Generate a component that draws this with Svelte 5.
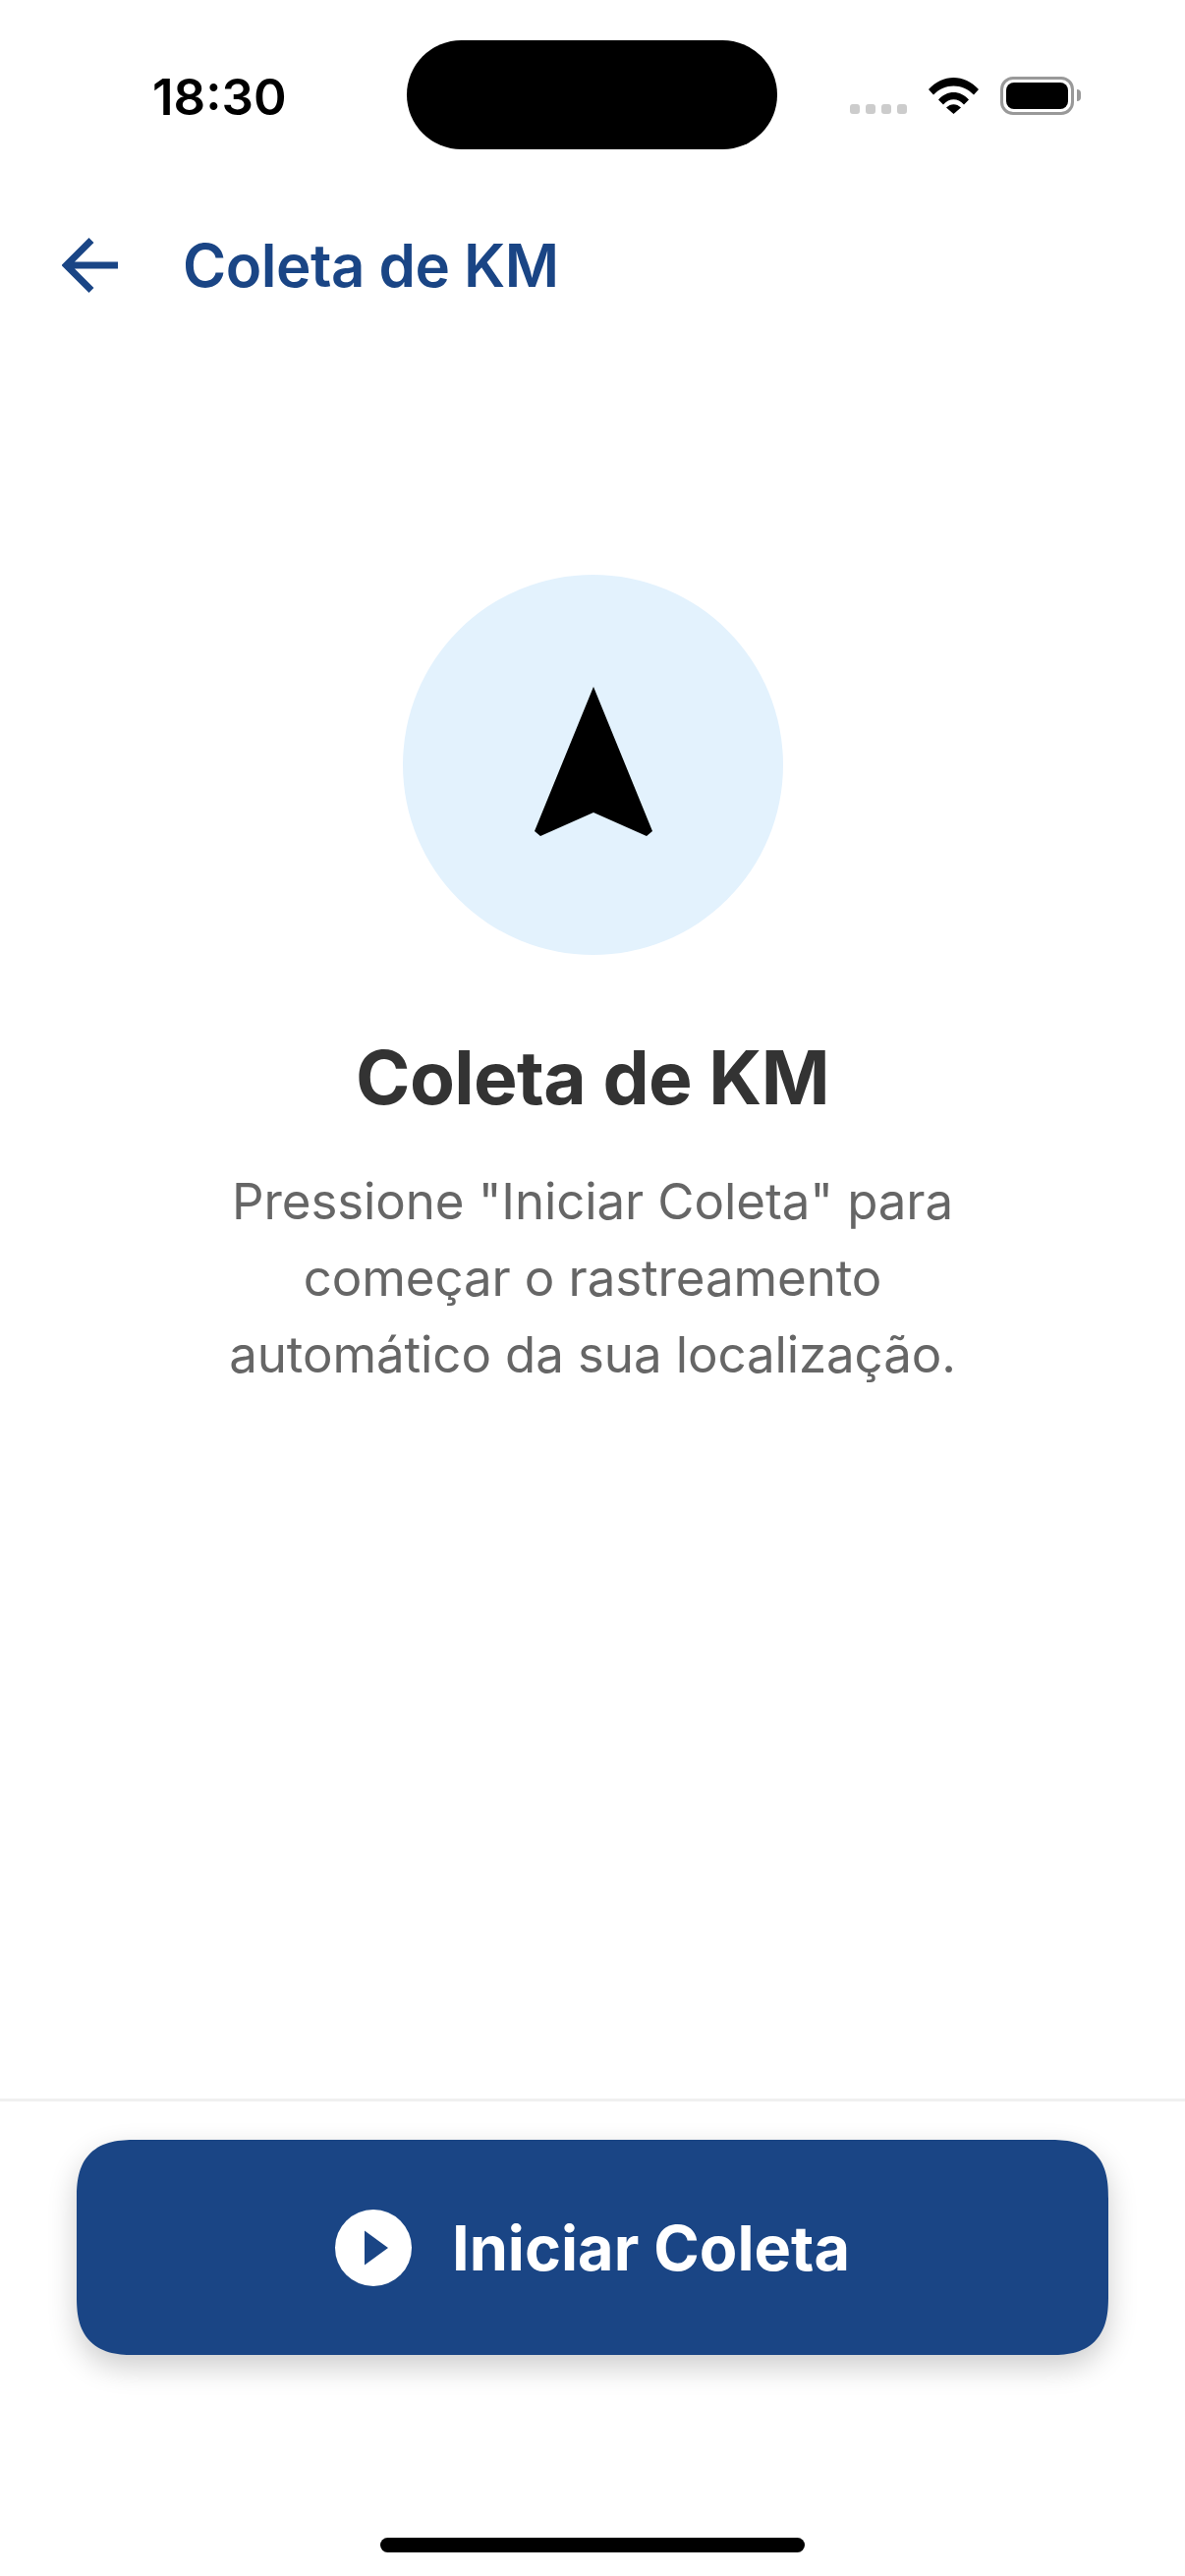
<script>
	const title = 'Coleta de KM'
	const signalDots = [0, 1, 2, 3]
</script>

<div class="screen">
	<div class="status-bar">
		<span class="time">18:30</span>
		<div class="island"></div>
		<div class="signal">
			{#each signalDots as dot (dot)}
				<span class="dot"></span>
			{/each}
		</div>
		<svg class="wifi" width="51" height="37" viewBox="0 0 51 37">
			<path d="M0 12 C14.500 -4 36.500 -4 51 12 L46 17.500 C34.500 5.500 16.500 5.500 5 17.500 Z" />
			<path d="M10 22.500 C18.500 12.500 32.500 12.500 41 22.500 L36 27.500 C30 20.500 21 20.500 15 27.500 Z" />
			<path d="M18 30.500 C22.500 26 28.500 26 33 30.500 L25.500 37 Z" />
		</svg>
		<div class="battery"><div class="battery-fill"></div></div>
		<div class="battery-cap"></div>
	</div>

	<header class="top-bar">
		<svg class="back" width="57" height="56" viewBox="0 0 57 56" fill="none">
			<path d="M57 28 H6 M30 2.500 L4.500 28 L30 53.500" stroke="#1a4585" stroke-width="7" />
		</svg>
		<h1>{title}</h1>
	</header>

	<main class="content">
		<div class="circle">
			<svg width="120" height="152" viewBox="0 0 120 152">
				<path d="M60 0 L120 147 L114 152 L60 128 L6 152 L0 147 Z" fill="#000" />
			</svg>
		</div>
		<h2>{title}</h2>
		<p>Pressione "Iniciar Coleta" para<br />começar o rastreamento<br />automático da sua localização.</p>
	</main>

	<footer class="actions">
		<button class="start">
			<svg width="78" height="78" viewBox="0 0 78 78">
				<circle cx="39" cy="39" r="39" fill="#fff" />
				<path d="M30 21.500 L54 39 L30 56.500 Z" fill="#1a4585" />
			</svg>
			<span>Iniciar Coleta</span>
		</button>
		<div class="home-indicator"></div>
	</footer>
</div>

<style>
	:global(body) {
		background: #fff;
	}

	.screen {
		width: 1206px;
		height: 2622px;
		display: flex;
		flex-direction: column;
		background: #fff;
		font-family: Inter, "Liberation Sans", sans-serif;
		overflow: hidden;
	}

	.status-bar {
		height: 152px;
		box-sizing: border-box;
		padding-top: 41px;
		display: flex;
		align-items: flex-start;
	}

	.time {
		width: 134px;
		margin-left: 155px;
		margin-top: 27px;
		font-size: 51px;
		line-height: 62px;
		font-weight: 600;
		color: #000;
		white-space: nowrap;
	}

	.island {
		width: 377px;
		height: 111px;
		margin-left: 125px;
		border-radius: 56px;
		background: #000;
	}

	.signal {
		display: flex;
		gap: 6px;
		margin-left: 74px;
		margin-top: 65px;
	}

	.dot {
		width: 10px;
		height: 10px;
		border-radius: 3px;
		background: #ccc;
	}

	.wifi {
		margin-left: 22px;
		margin-top: 38px;
		fill: #000;
	}

	.battery {
		width: 75px;
		height: 39px;
		margin-left: 22px;
		margin-top: 37px;
		box-sizing: border-box;
		border: 3px solid #999;
		border-radius: 13px;
		padding: 3px;
	}

	.battery-fill {
		height: 100%;
		border-radius: 8px;
		background: #000;
	}

	.battery-cap {
		width: 4px;
		height: 12px;
		margin-left: 3px;
		margin-top: 50px;
		border-radius: 0 6px 6px 0;
		background: #999;
	}

	.top-bar {
		height: 236px;
		box-sizing: border-box;
		padding: 0 0 0 63px;
		display: flex;
		align-items: center;
		gap: 66px;
	}

	.top-bar h1 {
		margin: 0;
		font-size: 60px;
		line-height: 72px;
		font-weight: 600;
		letter-spacing: -0.5px;
		color: #1a4585;
	}

	.content {
		flex: 1;
		display: flex;
		flex-direction: column;
		align-items: center;
		padding-top: 197px;
	}

	.circle {
		width: 387px;
		height: 387px;
		border-radius: 50%;
		background: #e3f2fd;
		display: flex;
		align-items: center;
		justify-content: center;
	}

	.circle svg {
		margin: 0 0 8px 1px;
	}

	.content h2 {
		margin: 82px 0 0;
		font-size: 75px;
		line-height: 86px;
		font-weight: 700;
		letter-spacing: -0.6px;
		color: #333;
	}

	.content p {
		margin: 44px 0 0;
		font-size: 51px;
		line-height: 78px;
		letter-spacing: -0.1px;
		text-align: center;
		color: #666;
	}

	.actions {
		height: 486px;
		box-sizing: border-box;
		border-top: 3px solid #f0f0f0;
		padding: 39px 78px 0;
		display: flex;
		flex-direction: column;
		align-items: center;
	}

	.start {
		width: 1050px;
		height: 219px;
		border: none;
		border-radius: 60px;
		corner-shape: superellipse(1.4);
		background: #1a4585;
		box-shadow: 0 12px 30px rgba(0, 0, 0, 0.2);
		display: flex;
		align-items: center;
		justify-content: center;
		gap: 41px;
		color: #fff;
		font-family: inherit;
		font-size: 63px;
		font-weight: 700;
		padding: 0;
	}

	.home-indicator {
		width: 432px;
		height: 15px;
		margin-top: 186px;
		border-radius: 8px;
		background: #000;
	}
</style>
